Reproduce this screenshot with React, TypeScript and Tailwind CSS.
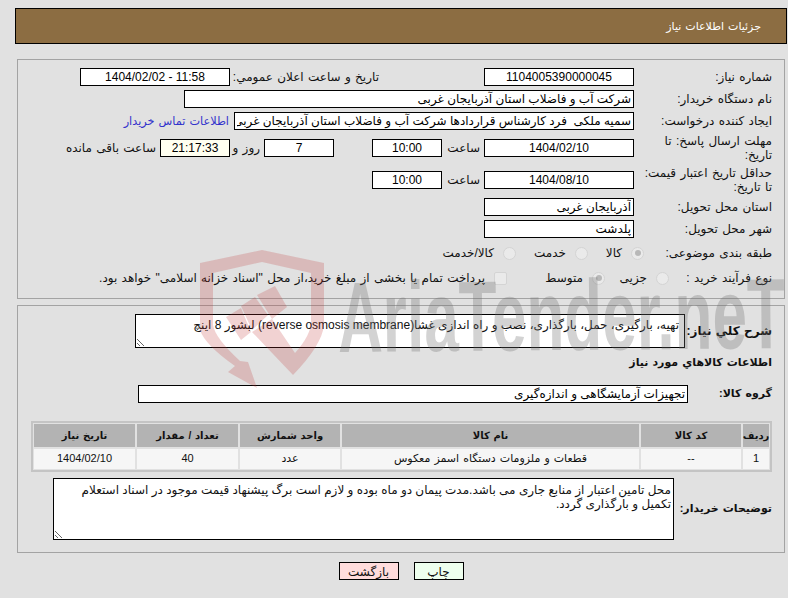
import React from "react";
function Box({ value, className = "", center = false }: { value: string; className?: string; center?: boolean }) {
  return (
    <input readOnly value={value} dir="rtl"
      className={`h-[18px] border border-black bg-white px-[2px] text-[12px] text-black outline-none ${center ? "text-center" : "text-right"} ${className}`} />
  );
}
function Label({ children }: { children: React.ReactNode }) {
  return <div className="w-[138px] shrink-0 leading-[14px]">{children}</div>;
}
function Radio({ checked = false }: { checked?: boolean }) {
  return (
    <span className="flex h-[13px] w-[13px] shrink-0 items-center justify-center rounded-full border border-[#d4d4d4] bg-[#eaeaea]">
      {checked && <span className="h-[6px] w-[6px] rounded-full bg-[#b8b8b8]" />}
    </span>
  );
}
export default function App() {
  const head = ["ردیف", "کد کالا", "نام کالا", "واحد شمارش", "تعداد / مقدار", "تاریخ نیاز"];
  const row = ["1", "--", "قطعات و ملزومات دستگاه اسمز معکوس", "عدد", "40", "1404/02/10"];
  const widths = ["w-[26px]", "w-[100px]", "w-[297px]", "w-[100px]", "w-[101px]", "w-[101px]"];
  return (
    <div dir="rtl" className="relative h-[598px] w-[788px] overflow-hidden bg-[#e1e1e1] text-[12px] text-[#111] [word-spacing:1px] font-['Liberation_Sans','DejaVu_Sans',sans-serif]">
      <div className="mr-[1px] mt-[8px] flex h-[36px] w-[772px] items-center border border-black bg-[#8c6d42] pr-[25px] text-[11px] text-white">جزئیات اطلاعات نیاز</div>
      <div className="mr-[3px] ml-[17px] mt-[15px] h-[240px] border border-[#a3a3a3] pr-[12px] pt-[8px]">
        <div className="flex h-[18px] items-center">
          <Label>شماره نیاز:</Label><Box value="1104005390000045" center className="w-[150px]" />
          <div className="mr-[105px] w-[149px] whitespace-nowrap">تاریخ و ساعت اعلان عمومي:</div><Box value="11:58 - 1404/02/02" center className="w-[150px]" />
        </div>
        <div className="mt-[4px] flex h-[18px] items-center">
          <Label>نام دستگاه خریدار:</Label><Box value="شرکت آب و فاضلاب استان آذربایجان غربی" className="w-[450px]" />
        </div>
        <div className="mt-[4px] flex h-[18px] items-center">
          <Label>ایجاد کننده درخواست:</Label><Box value="سمیه ملکی  فرد کارشناس قراردادها شرکت آب و فاضلاب استان آذربایجان غربی" className="w-[400px]" />
          <span className="mr-[5px] text-[11.25px] text-[#3333cc]">اطلاعات تماس خریدار</span>
        </div>
        <div className="mt-[9px] flex h-[18px] items-center">
          <Label>مهلت ارسال پاسخ: تا<br />تاریخ:</Label><Box value="1404/02/10" center className="w-[150px]" />
          <span className="mr-[4px] w-[38px]">ساعت</span><Box value="10:00" center className="w-[70px]" />
          <span className="w-[38px]" /><Box value="7" center className="w-[70px]" />
          <span className="mr-[4px] w-[30px]">روز و</span><Box value="21:17:33" center className="w-[70px] !bg-[#fffff0]" />
          <span className="mr-[4px]">ساعت باقی مانده</span>
        </div>
        <div className="mt-[14px] flex h-[18px] items-center">
          <Label>حداقل تاریخ اعتبار قیمت:<br />تا تاریخ:</Label><Box value="1404/08/10" center className="w-[150px]" />
          <span className="mr-[4px] w-[38px]">ساعت</span><Box value="10:00" center className="w-[70px]" />
        </div>
        <div className="mt-[9px] flex h-[18px] items-center">
          <Label>استان محل تحویل:</Label><Box value="آذربایجان غربی" className="w-[150px]" />
        </div>
        <div className="mt-[4px] flex h-[18px] items-center">
          <Label>شهر محل تحویل:</Label><Box value="پلدشت" className="w-[150px]" />
        </div>
        <div className="mt-[6px] flex h-[18px] items-center">
          <div className="w-[128px] shrink-0">طبقه بندی موضوعی:</div>
          <Radio checked /><span className="mr-[9px] w-[34px]">کالا</span>
          <Radio /><span className="mr-[9px] w-[50px]">خدمت</span>
          <Radio /><span className="mr-[9px]">کالا/خدمت</span>
        </div>
        <div className="mt-[7px] flex h-[18px] items-center">
          <div className="w-[103px] shrink-0">نوع فرآیند خرید :</div>
          <Radio /><span className="mr-[9px] w-[42px]">جزیی</span>
          <Radio checked /><span className="mr-[9px] w-[76px]">متوسط</span>
          <span className="h-[13px] w-[13px] shrink-0 rounded-[2px] border border-[#d4d4d4] bg-[#eaeaea]" />
          <span className="mr-[9px] whitespace-nowrap">پرداخت تمام یا بخشی از مبلغ خرید،از محل "اسناد خزانه اسلامی" خواهد بود.</span>
        </div>
      </div>
      <div className="mr-[3px] ml-[17px] mt-[6px] h-[248px] border border-[#a3a3a3] pt-[8px]">
        <div className="flex items-center pr-[12px]">
          <div className="w-[87px] shrink-0 whitespace-nowrap text-[12px] font-bold">شرح کلي نیاز:</div>
          <textarea readOnly dir="rtl" value="تهیه، بارگیری، حمل، بارگذاری، نصب و راه اندازی غشا(reverse osmosis membrane) لبشور 8 اینچ"
            className="h-[34px] w-[550px] border border-black bg-white px-[5px] py-[1px] text-[12px] text-[#111] outline-none" />
        </div>
        <div className="mt-[6px] pr-[12px] text-[11px] font-bold">اطلاعات کالاهاي مورد نیاز</div>
        <div className="mt-[14px] flex items-center pr-[12px]">
          <div className="w-[84px] shrink-0 text-[11px] font-bold">گروه کالا:</div>
          <Box value="تجهیزات آزمایشگاهی و اندازه‌گیری" className="w-[550px]" />
        </div>
        <div className="mr-[12px] mt-[18px] flex w-[741px] flex-col gap-[2px] border-2 border-[#c4c4c4] p-[1px]">
          <div className="flex gap-[2px]">
            {head.map((h, i) => <div key={h} className={`${widths[i]} flex h-[23px] items-center justify-center whitespace-nowrap bg-[#b3b3b3] text-[10px] font-bold`}>{h}</div>)}
          </div>
          <div className="flex gap-[2px]">
            {row.map((c, i) => <div key={i} className={`${widths[i]} flex h-[20px] items-center justify-center bg-[#f6f6f6] text-[11px]`}>{c}</div>)}
          </div>
        </div>
        <div className="mt-[6px] flex items-center pr-[12px]">
          <div className="w-[98px] shrink-0 whitespace-nowrap text-[11px] font-bold">توضیحات خریدار:</div>
          <textarea readOnly dir="rtl" value="محل تامین اعتبار از منابع جاری می باشد.مدت پیمان دو ماه بوده و لازم است برگ پیشنهاد قیمت موجود در اسناد استعلام تکمیل و بارگذاری گردد."
            className="h-[62px] w-[621px] border border-black bg-white px-[2px] py-[4px] text-[12px] leading-[14px] text-[#111] outline-none" />
        </div>
      </div>
      <div className="mt-[9px] flex justify-center gap-[15px] pl-[14px]">
        <button className="h-[18px] w-[50px] border border-black bg-[#eeffee] text-[12px] text-[#111]">چاپ</button>
        <button className="h-[18px] w-[60px] border border-black bg-[#ffdcdc] text-[12px] text-[#111]">بازگشت</button>
      </div>
      <svg className="pointer-events-none absolute left-[190px] top-[240px]" width="150" height="150" viewBox="190 240 150 150">
        <g fill="rgb(190,50,50)" fillOpacity="0.22">
          <path d="M262 250 L324 263 L324 325 Q322 345 293 375 L252 332 L272 319 L295 353 Q311 335 311 322 L311 273 L262 262 L213 273 L213 325 Q215 338 240 361 L248 362 L257 388 L228 372 L235 366 Q205 345 200 330 L200 263 Z" />
          <path d="M226 317 L241 308 L251 332 L241 340 Z" />
          <path d="M241 306 L255 297 L268 315 L252 330 Z" />
          <path d="M257 295 L275 286 L287 307 L272 319 Z" />
        </g>
      </svg>
      <div dir="ltr" className="pointer-events-none absolute left-[338px] top-[262px] origin-left -rotate-[0.5deg] scale-x-[0.62] whitespace-nowrap text-[100px] font-bold leading-[110px] [word-spacing:0] text-[#6e6e6e]/30">AriaTender.neT</div>
    </div>
  );
}
